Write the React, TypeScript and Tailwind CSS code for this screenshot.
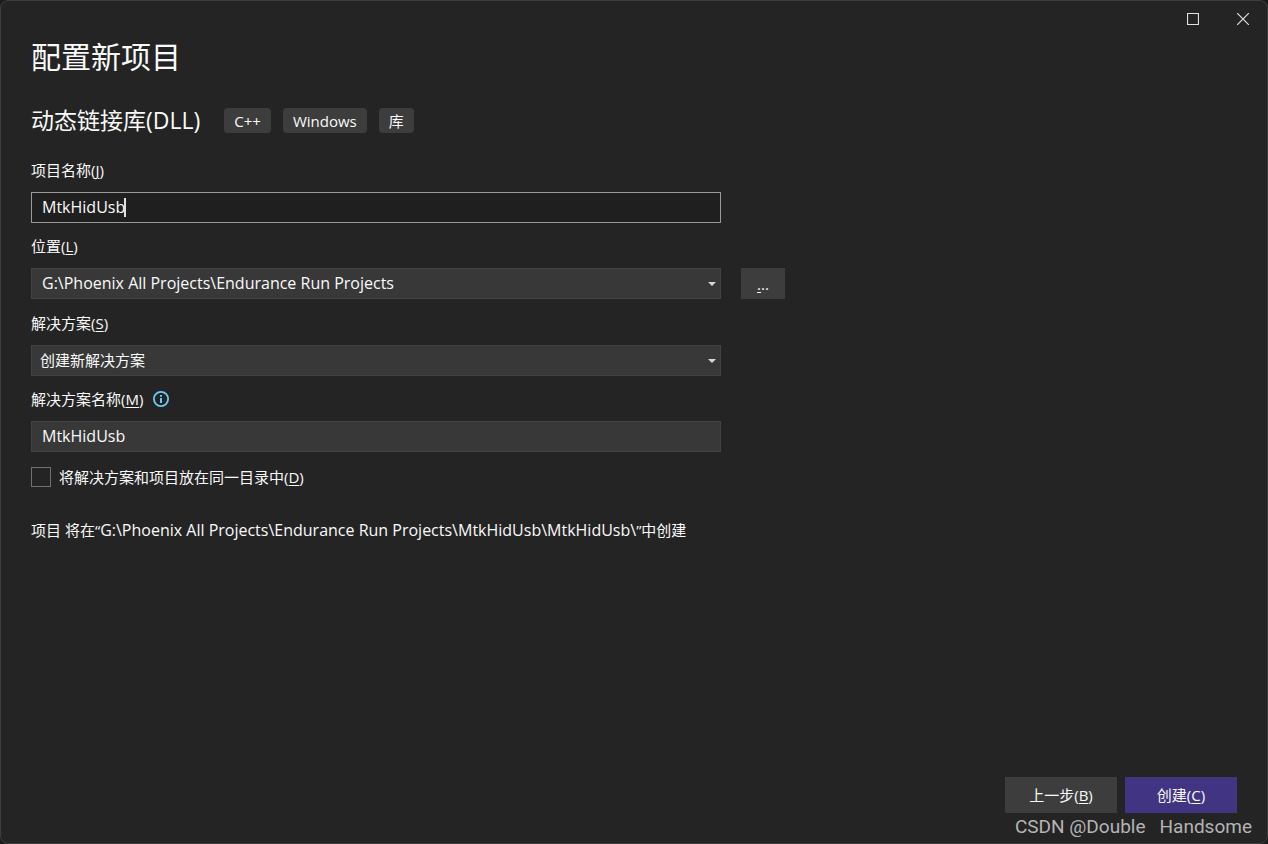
import { ReactNode } from 'react';

const PROJECT_NAME = 'MtkHidUsb';
const LOCATION = 'G:\\Phoenix All Projects\\Endurance Run Projects';
const TAGS = ['C++', 'Windows', '库'];

function HotKey({ children }: { children: ReactNode }) {
  return (
    <>
      (<span className="underline underline-offset-2">{children}</span>)
    </>
  );
}

function Field({
  id,
  label,
  hotKey,
  icon,
  children,
}: {
  id: string;
  label: string;
  hotKey: string;
  icon?: ReactNode;
  children: ReactNode;
}) {
  return (
    <div className="flex flex-col gap-3">
      <div className="flex h-5 items-center gap-2.5">
        <label htmlFor={id}>
          {label}
          <HotKey>{hotKey}</HotKey>
        </label>
        {icon}
      </div>
      {children}
    </div>
  );
}

function SelectBox({
  id,
  value,
  className,
}: {
  id: string;
  value: string;
  className: string;
}) {
  return (
    <div className="relative w-full max-w-[690px]">
      <select
        id={id}
        className={`block h-[31px] w-full appearance-none border border-[#424242] bg-[#383838] pr-7 pb-0.5 outline-none ${className}`}
      >
        <option>{value}</option>
      </select>
      <svg
        className="pointer-events-none absolute top-3.5 right-[5px] h-1 w-2"
        viewBox="0 0 8 4"
        fill="#d6d6d6"
      >
        <path d="M0 0h8L4 4z" />
      </svg>
    </div>
  );
}

function InfoIcon() {
  return (
    <svg className="size-4" viewBox="0 0 16 16" fill="none" stroke="#6ccbf5">
      <circle cx="8" cy="8" r="7.1" strokeWidth="1.8" />
      <path d="M8 7v5M8 4v1.8" strokeWidth="2" />
    </svg>
  );
}

export default function App() {
  return (
    <div className="min-h-screen bg-[#1b1b1b] font-['Open_Sans','Noto_Sans_CJK_SC',sans-serif] text-[15px] leading-5 text-[#fafafa]">
      <div className="relative flex min-h-screen flex-col rounded-lg border border-[#3d3d3d] bg-[#242424]">
        <header className="flex h-9 justify-end">
          <button aria-label="最大化" className="flex w-[50px] items-center justify-center">
            <svg className="size-3" viewBox="0 0 12 12" fill="none" stroke="#e0e0e0">
              <path d="M.5.5h11v11H.5z" strokeWidth="1.2" />
            </svg>
          </button>
          <button aria-label="关闭" className="flex w-[49px] items-center justify-center">
            <svg className="size-3" viewBox="0 0 12 12" fill="none" stroke="#e0e0e0">
              <path d="M0 0l12 12M12 0L0 12" strokeWidth="1.2" />
            </svg>
          </button>
        </header>

        <main className="flex flex-1 flex-col px-[30px]">
          <h1 className="text-[30px] leading-10">配置新项目</h1>

          <div className="mt-6 flex h-[38px] items-center">
            <h2 className="mr-6 text-[23px] leading-8">动态链接库(DLL)</h2>
            <ul className="flex gap-3">
              {TAGS.map((tag) => (
                <li key={tag} className="flex h-[25px] items-center rounded bg-[#3d3d3d] px-2.5 pt-0.5">
                  {tag}
                </li>
              ))}
            </ul>
          </div>

          <form className="mt-[21px] flex flex-col gap-3.5" onSubmit={(e) => e.preventDefault()}>
            <div className="flex flex-col gap-[13px]">
              <Field id="project-name" label="项目名称" hotKey="J">
                <div className="relative w-full max-w-[690px]">
                  <input
                    id="project-name"
                    defaultValue={PROJECT_NAME}
                    className="block h-[31px] w-full border border-[#9a9a9a] bg-[#1f1f1f] px-2.5 pb-0.5 text-base outline-none"
                  />
                  <span className="absolute top-1.5 left-[93px] h-[19px] w-0.5 bg-[#e0e0e0]" />
                </div>
              </Field>

              <Field id="location" label="位置" hotKey="L">
                <div className="flex gap-5">
                  <SelectBox id="location" value={LOCATION} className="pl-2.5 text-base" />
                  <button type="button" aria-label="浏览" className="h-[31px] w-11 shrink-0 bg-[#3d3d3d]">
                    <span className="underline underline-offset-2">.</span>..
                  </button>
                </div>
              </Field>
            </div>

            <div className="flex flex-col gap-[13px]">
              <Field id="solution" label="解决方案" hotKey="S">
                <SelectBox id="solution" value="创建新解决方案" className="pl-2" />
              </Field>

              <Field id="solution-name" label="解决方案名称" hotKey="M" icon={<InfoIcon />}>
                <input
                  id="solution-name"
                  defaultValue={PROJECT_NAME}
                  className="block h-[31px] w-full max-w-[690px] border border-[#424242] bg-[#383838] px-2.5 pb-0.5 text-base outline-none"
                />
              </Field>
            </div>

            <label className="mt-px flex items-center gap-2">
              <input
                type="checkbox"
                className="size-5 appearance-none border border-[#717171] bg-[#242424]"
              />
              <span>
                将解决方案和项目放在同一目录中
                <HotKey>D</HotKey>
              </span>
            </label>
          </form>

          <p className="mt-[33px]">
            项目 将在“
            <span className="text-base leading-5">
              {LOCATION}\{PROJECT_NAME}\{PROJECT_NAME}\
            </span>
            ”中创建
          </p>
        </main>

        <footer className="flex justify-end gap-2 px-[30px] pb-[30px]">
          <button className="h-9 w-28 bg-[#3d3d3d]">
            上一步
            <HotKey>B</HotKey>
          </button>
          <button className="h-9 w-28 bg-[#413482]">
            创建
            <HotKey>C</HotKey>
          </button>
        </footer>

        <span className="absolute right-[15px] bottom-1 flex gap-3.5 font-['Roboto',sans-serif] text-[19px] leading-6 text-[#b4b4b4]">
          <span>CSDN @Double</span>
          <span>Handsome</span>
        </span>
      </div>
    </div>
  );
}
